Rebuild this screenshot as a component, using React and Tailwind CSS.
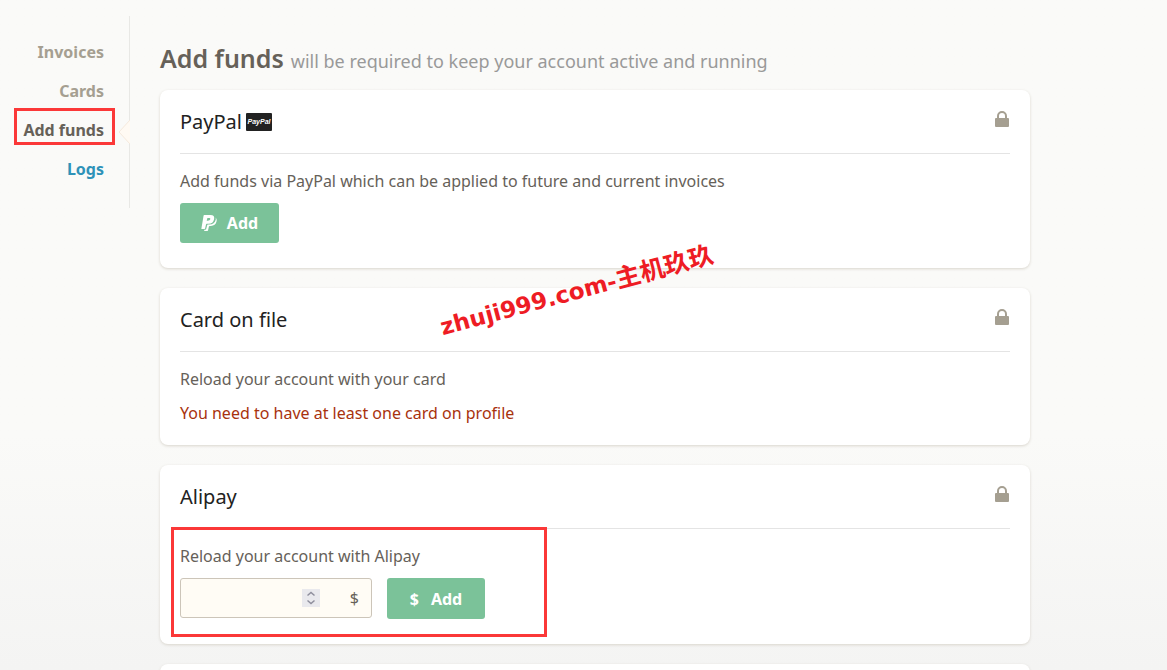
import React from "react";

function LockIcon() {
  return (
    <svg viewBox="0 0 14 16" className="h-4 w-3.5 text-[#a59f91]" role="img" aria-label="Secure">
      <path fill="none" stroke="currentColor" strokeWidth="2" d="M3 8V5a4 4 0 0 1 8 0v3" />
      <rect x="0" y="7" width="14" height="9" rx="1" fill="currentColor" />
    </svg>
  );
}

function PayPalCard() {
  return (
    <svg viewBox="0 0 26 18" className="h-[18px] w-[26px]" role="img" aria-label="PayPal">
      <rect width="26" height="18" rx="1" fill="#222" />
      <text x="13" y="11" textAnchor="middle" fill="#fff" fontFamily="Liberation Sans, sans-serif" fontSize="7" fontWeight="700" fontStyle="italic">PayPal</text>
    </svg>
  );
}

function PayPalMark() {
  return (
    <svg viewBox="0 0 16 16" className="h-4 w-4" aria-hidden="true">
      <path fill="#fff" fillRule="evenodd" d="M3.200 0h6.200c3.100 0 4.300 1.600 3.700 4.200-.7 3-2.500 4.600-5.600 4.600H5.800c-.5 0-.7.3-.8.7l-.9 4c-.1.300-.3.500-.6.500H.8c-.4 0-.5-.3-.4-.6L2.600.6C2.700.2 2.900 0 3.200 0Zm3.200 2.900-.7 2.900h1c1.500 0 2.300-.6 2.600-1.700.2-.8-.3-1.200-1.400-1.200Z" />
      <path fill="#fff" d="M14.300 2.500c1.300.9 1.700 2.300 1.200 4.100-.7 2.900-2.600 4.300-5.600 4.300H8.700c-.5 0-.7.300-.8.700l-.8 3.700c-.1.500-.4.700-.8.700H3.600c-.4 0-.5-.3-.4-.7l.1-.5h1c.5 0 .8-.2.900-.7l.9-3.700c.1-.5.400-.8.900-.8h1.200c3.500 0 5.900-1.800 6.600-5.100.2-.7.100-1.400-.5-2Z" />
    </svg>
  );
}

function Card({ title, badge, children }) {
  return (
    <section className="min-h-16 rounded-lg bg-white px-5 pb-[25px] shadow-[0_1px_3px_#d9d5cd]">
      {title && (
        <header className="flex h-16 items-start justify-between border-b border-[#e4e4e4] pt-4">
          <h2 className="flex items-center gap-1 text-xl leading-8 text-[#222]">
            {title}
            {badge}
          </h2>
          <span className="pt-[5px] pr-px"><LockIcon /></span>
        </header>
      )}
      <div className="pt-[15px] leading-6 text-[#666159]">{children}</div>
    </section>
  );
}

const links = [
  { label: "Invoices", color: "text-[#a59f91]" },
  { label: "Cards", color: "text-[#a59f91]" },
  { label: "Add funds", color: "text-[#666159]", active: true },
  { label: "Logs", color: "text-[#2e92b8]" },
];

export default function App() {
  return (
    <div className="relative h-screen overflow-hidden bg-linear-to-b from-[#fafaf8] from-65% to-[#f4f4f3] font-['Noto_Sans','Noto_Sans_CJK_SC',sans-serif] text-base">
      <div className="flex">
        <nav className="mt-4 flex h-48 w-[130px] shrink-0 flex-col gap-[15px] border-r border-[#e8e8e5] pt-6 pr-[25px] text-right font-bold leading-6">
          {links.map((l) => (
            <div key={l.label} className="relative">
              <a href="#" className={l.color}>{l.label}</a>
              {l.active && (
                <>
                  <span className="absolute -top-2.5 -right-[11px] h-[37px] w-[101px] border-3 border-[#fb3838]" />
                  <svg viewBox="0 0 12 24" className="absolute top-0.5 -right-[26px] h-6 w-3" aria-hidden="true">
                    <path d="M12 0 1 12l11 12" fill="#fffaf3" stroke="#f5e9dc" />
                  </svg>
                </>
              )}
            </div>
          ))}
        </nav>
        <main className="mr-[137px] ml-[30px] flex-1 pt-[38px]">
          <h1 className="mb-3 flex items-baseline gap-[7px] text-[25px] leading-10 font-semibold text-[#666159]">
            Add funds
            <small className="text-lg font-normal text-[#999]">will be required to keep your account active and running</small>
          </h1>
          <div className="flex flex-col gap-5">
            <Card title="PayPal" badge={<PayPalCard />}>
              <p>Add funds via PayPal which can be applied to future and current invoices</p>
              <button className="mt-2.5 flex h-10 w-[99px] items-center justify-center gap-2.5 rounded-[3px] bg-[#7bc299] font-bold text-white">
                <PayPalMark />
                Add
              </button>
            </Card>
            <Card title="Card on file">
              <p>Reload your account with your card</p>
              <p className="mt-2.5 -mb-[5px] text-[#a8320d]">You need to have at least one card on profile</p>
            </Card>
            <div className="relative">
              <Card title="Alipay">
                <label htmlFor="amount">Reload your account with Alipay</label>
                <div className="mt-2.5 flex items-start gap-[15px]">
                  <div className="flex h-10 w-48 items-center rounded-[3px] border border-[#ccc5b9] bg-[#fffcf5] pr-3">
                    <input id="amount" type="number" className="h-full w-[121px] appearance-none bg-transparent px-3 outline-none [&::-webkit-inner-spin-button]:appearance-none" />
                    <svg viewBox="0 0 18 18" className="size-[18px] bg-[#e9e9ed]" aria-hidden="true">
                      <path d="m5.500 6.500 3.500-3 3.500 3m-7 5 3.500 3 3.500-3" fill="none" stroke="#8f8f9d" strokeWidth="1.500" />
                    </svg>
                    <span className="ml-auto">$</span>
                  </div>
                  <button className="flex h-[41px] w-[98px] items-center justify-center gap-3 rounded-[3px] bg-[#7bc299] font-bold text-white">
                    <span>$</span>
                    Add
                  </button>
                </div>
              </Card>
              <span className="pointer-events-none absolute top-[62px] left-[11px] h-[110px] w-[376px] border-3 border-[#fb3838]" />
            </div>
            <Card />
          </div>
        </main>
      </div>
      <p className="pointer-events-none absolute top-[271px] left-[436px] -rotate-[15deg] font-['DejaVu_Sans','Noto_Sans_CJK_SC',sans-serif] text-[23px] leading-10 font-bold whitespace-nowrap text-[#ee1c24]">
        zhuji999.com-<span className="text-[25px]">主机玖玖</span>
      </p>
    </div>
  );
}
